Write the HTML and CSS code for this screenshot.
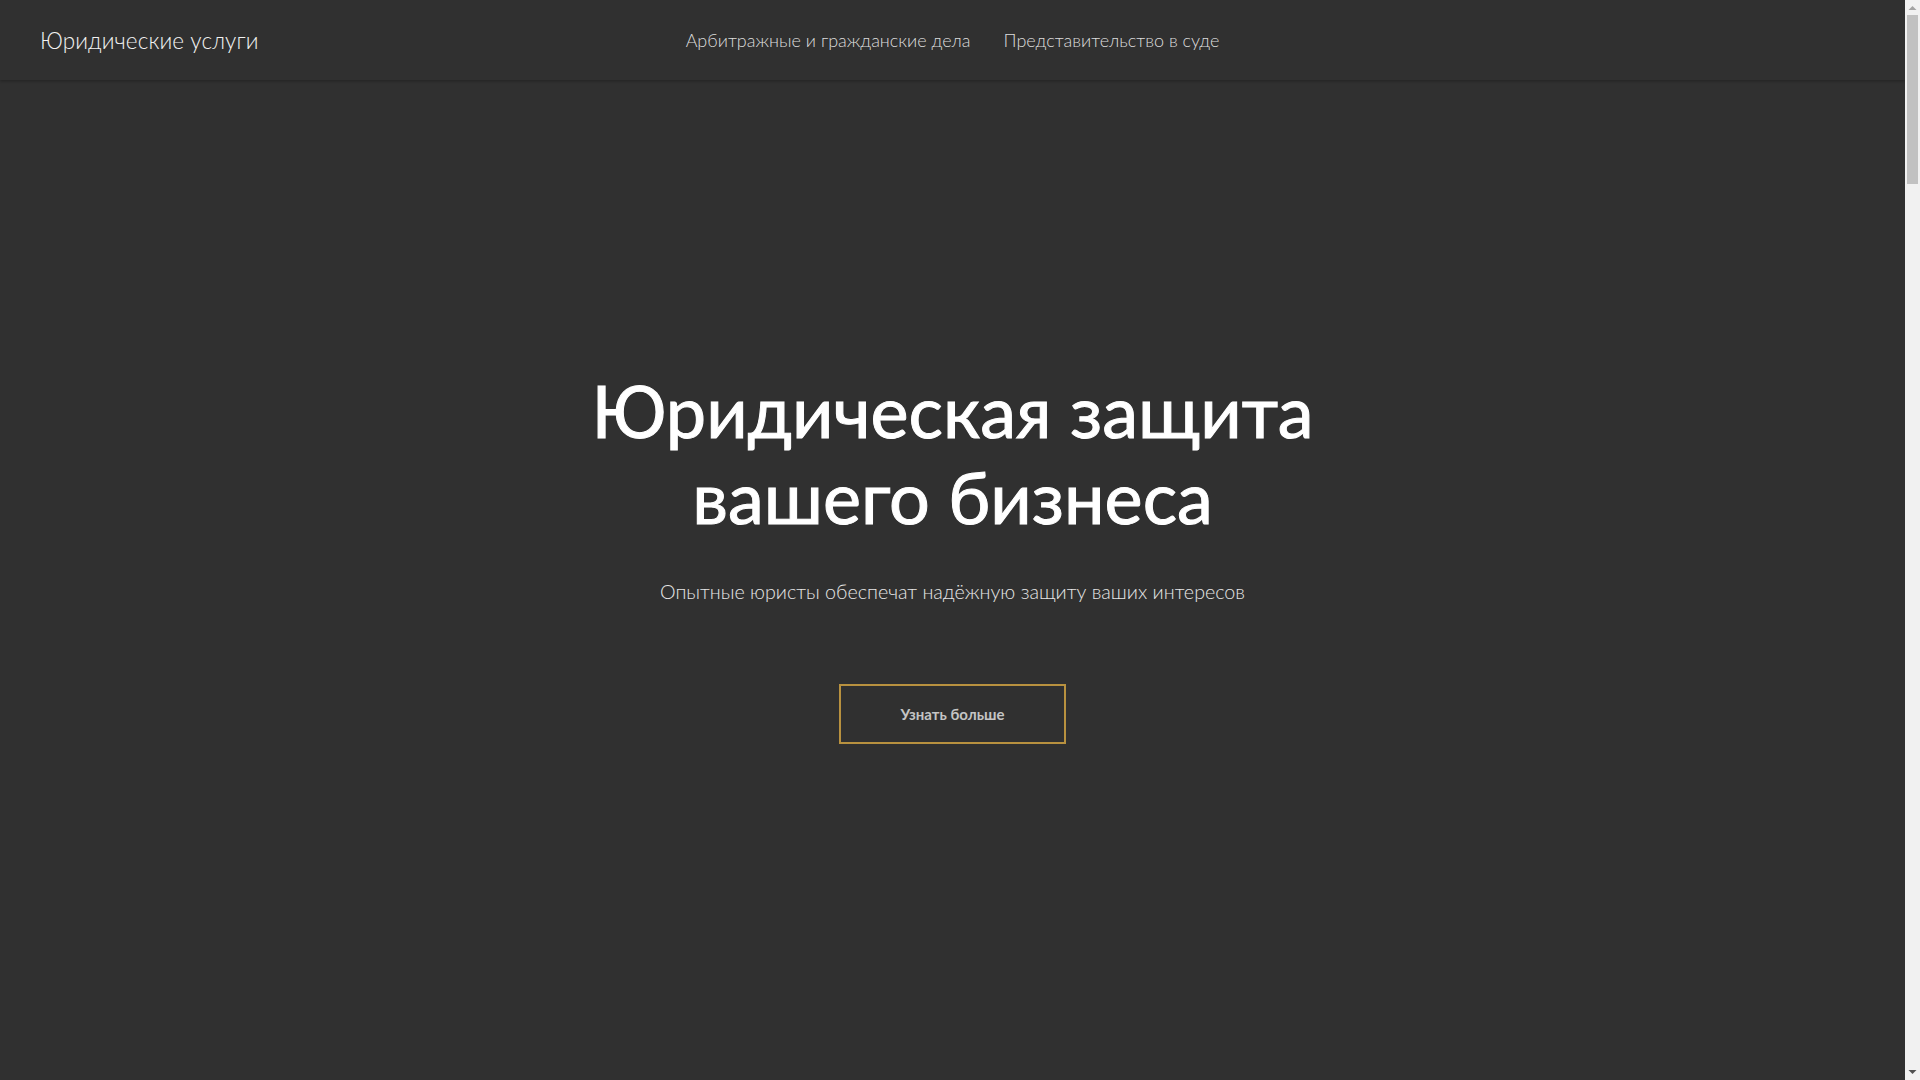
FILE: index.html
```html
<!DOCTYPE html>
<html lang="ru">
<head>
<meta charset="utf-8">
<title>Юридические услуги</title>
<link rel="stylesheet" href="styles.css">
</head>
<body>
<div class="page">
  <header class="site-header">
    <a class="logo" href="#">Юридические услуги</a>
    <nav class="main-nav">
      <a href="#">Арбитражные и гражданские дела</a>
      <a href="#">Представительство в суде</a>
    </nav>
    <div class="header-end"></div>
  </header>
  <main>
    <section class="hero">
      <h1 class="hero-title">Юридическая защита<br>вашего бизнеса</h1>
      <p class="hero-sub">Опытные юристы обеспечат надёжную защиту ваших интересов</p>
      <a class="hero-btn" href="#">Узнать больше</a>
    </section>
  </main>
</div>
<div class="scrollbar" aria-hidden="true">
  <svg class="sb-arrow" width="15" height="15" viewBox="0 0 15 15"><polygon points="3.5,10 11.5,10 7.5,6" fill="#a3a3a3"/></svg>
  <div class="sb-track"><div class="sb-thumb"></div></div>
  <svg class="sb-arrow" width="15" height="15" viewBox="0 0 15 15"><polygon points="3.5,5 11.5,5 7.5,9" fill="#505050"/></svg>
</div>
</body>
</html>
```
FILE: styles.css
```css
* { box-sizing: border-box; }
html, body { margin: 0; padding: 0; }
body {
  background: #303030;
  color: #ffffff;
  font-family: "Lato", "Noto Sans", sans-serif;
  overflow: hidden;
}
a { text-decoration: none; color: inherit; }

.page {
  margin-right: 15px;
  height: 1080px;
}

.scrollbar {
  position: fixed;
  top: 0;
  right: 0;
  width: 15px;
  height: 100vh;
  background: #f1f1f1;
  display: flex;
  flex-direction: column;
}
.sb-arrow { display: block; flex: none; }
.sb-track { flex: 1; padding: 0 2px; }
.sb-thumb { height: 169px; background: #c1c1c1; }

.site-header {
  height: 80px;
  display: grid;
  grid-template-columns: 1fr auto 1fr;
  align-items: center;
  padding: 0 40px;
  background: #303030;
  box-shadow: 0 1px 3px rgba(0, 0, 0, 0.3);
  position: relative;
}
.logo {
  font-size: 22.5px;
  font-weight: 300;
  color: #f2f2f2;
  letter-spacing: 0.1px;
}
.main-nav {
  display: flex;
  gap: 33px;
}
.main-nav a {
  font-size: 18px;
  font-weight: 300;
  color: #dcdcdc;
}

.hero {
  display: flex;
  flex-direction: column;
  align-items: center;
  text-align: center;
  padding-top: 287px;
}
.hero-title {
  margin: 0;
  font-size: 72px;
  line-height: 86px;
  font-weight: 400;
  color: #ffffff;
  -webkit-text-stroke: 1px #ffffff;
}
.hero-sub {
  margin: 37px 0 0;
  font-size: 19.7px;
  line-height: 32px;
  font-weight: 300;
  color: #e6e6e6;
}
.hero-btn {
  margin-top: 76px;
  width: 227px;
  height: 60px;
  border: 2px solid #b8913f;
  display: flex;
  align-items: center;
  justify-content: center;
  font-size: 15px;
  font-weight: 700;
  color: #c4c4c4;
}
```
